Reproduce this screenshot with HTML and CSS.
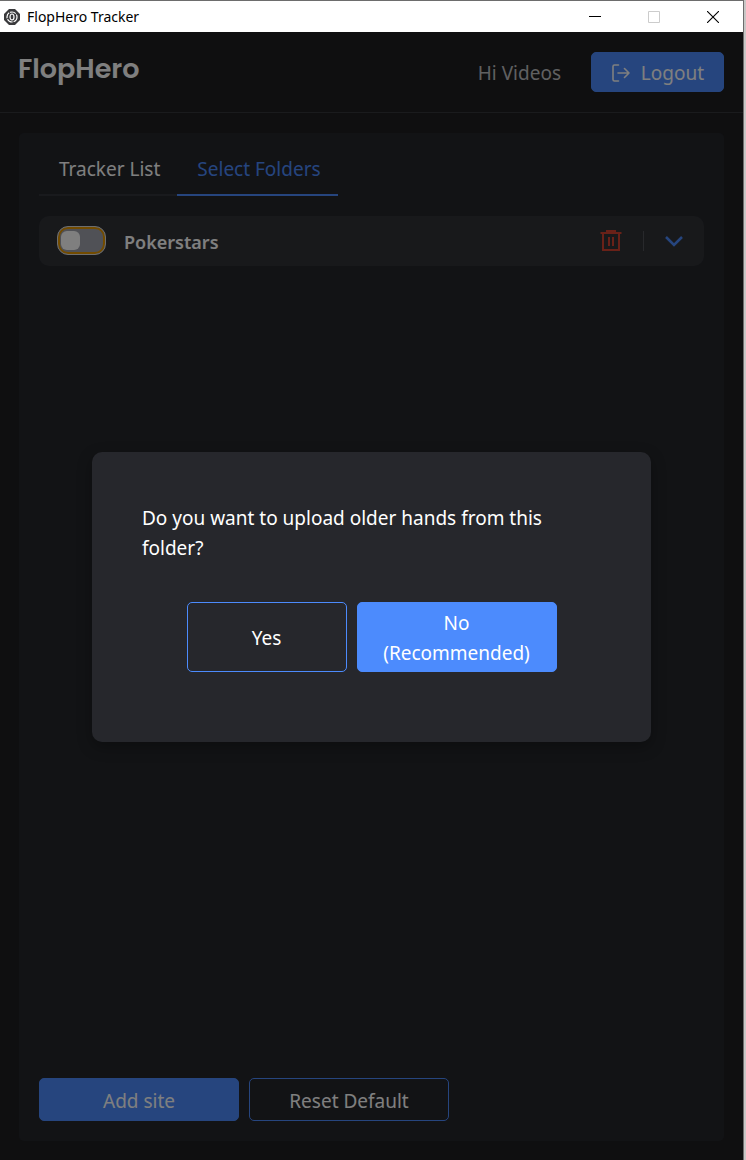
FILE: index.html
```html
<!DOCTYPE html>
<html lang="en">
<head>
    <meta charset="UTF-8">
    <meta name="viewport" content="width=device-width, initial-scale=1.0">
    <title>FlopHero Tracker</title>
    <link rel="stylesheet" href="styles.css">
</head>
<body>

    <div class="window">
        <div class="titlebar">
            <svg class="app-icon" viewBox="0 0 16 16" width="16" height="16">
                <path d="M5 0h6l5 5v6l-5 5H5l-5-5V5z" fill="#3a3a3c"/>
                <circle cx="8" cy="8" r="5" fill="none" stroke="#fff" stroke-width="1.2" stroke-dasharray="6 1"/>
                <ellipse cx="8" cy="8" rx="2" ry="3" fill="none" stroke="#fff" stroke-width="1.2"/>
            </svg>
            <span class="titlebar-text">FlopHero Tracker</span>
            <button class="win-btn" aria-label="Minimize">
                <svg viewBox="0 0 12 12" width="12" height="12"><path d="M0 5.5h12" stroke="#000"/></svg>
            </button>
            <button class="win-btn" aria-label="Maximize" disabled>
                <svg viewBox="0 0 12 12" width="12" height="12"><path d="M.5.5h11v11H.5z" fill="none" stroke="#ccc"/></svg>
            </button>
            <button class="win-btn" aria-label="Close">
                <svg viewBox="0 0 12 12" width="12" height="12"><path d="M0 0l12 12M12 0L0 12" stroke="#000" stroke-width="1.1"/></svg>
            </button>
        </div>

        <div class="app">
            <header class="header">
                <h1 class="logo">FlopHero</h1>
                <span class="greeting">Hi Videos</span>
                <button class="btn btn-primary btn-logout">
                    <svg viewBox="0 0 18 18" width="18" height="18" fill="none" stroke="currentColor" stroke-width="1.6" stroke-linecap="round" stroke-linejoin="round">
                        <path d="M6.500 1H2.500Q1 1 1 2.500v13Q1 17 2.500 17h4M6 9h11M12.500 4.500L17 9l-4.500 4.500"/>
                    </svg>
                    Logout
                </button>
            </header>

            <main class="panel">
                <nav class="tabs">
                    <a href="#list" class="tab">Tracker List</a>
                    <a href="#folders" class="tab active">Select Folders</a>
                </nav>

                <div class="site">
                    <input type="checkbox" class="toggle" id="pokerstars">
                    <label for="pokerstars" class="site-name">Pokerstars</label>
                    <button class="icon-btn delete" aria-label="Delete">
                        <svg viewBox="0 0 22 22" width="22" height="22" fill="none" stroke="currentColor" stroke-width="2">
                            <path d="M.500 3h21M6 1h10M3 3v17h16V3M9 7v9M13 7v9"/>
                        </svg>
                    </button>
                    <span class="divider"></span>
                    <button class="icon-btn" aria-label="Expand">
                        <svg viewBox="0 0 18 12" width="18" height="12" fill="none" stroke="currentColor" stroke-width="2.500">
                            <path d="M1 2l8 8 8-8"/>
                        </svg>
                    </button>
                </div>

                <div class="actions">
                    <button class="btn btn-primary">Add site</button>
                    <button class="btn btn-outline">Reset Default</button>
                </div>
            </main>

            <div class="overlay">
                <div class="modal" role="dialog" aria-modal="true" aria-labelledby="question">
                    <p id="question" class="modal-text">Do you want to upload older hands from this folder?</p>
                    <div class="modal-actions">
                        <button class="btn btn-outline btn-yes">Yes</button>
                        <button class="btn btn-primary btn-no">No (Recommended)</button>
                    </div>
                </div>
            </div>
        </div>
    </div>

</body>
</html>
```
FILE: styles.css
```css
* {
    box-sizing: border-box;
}
body {
    margin: 0;
    padding-right: 2px;
    background-color: #c9c7c6;
    font-family: "Segoe UI", "Noto Sans", sans-serif;
    font-size: 19px;
    line-height: 30px;
    color: #fff;
}
button {
    font: inherit;
    color: inherit;
    cursor: pointer;
}
.window {
    display: flex;
    flex-direction: column;
    min-height: 100vh;
    border-top: 1px solid #6d6d6d;
    border-right: 1px solid #6d6d6d;
}

/* Title bar */
.titlebar {
    display: flex;
    align-items: center;
    height: 31px;
    padding: 0 1px 0 4px;
    background-color: #fff;
    color: #000;
    font-size: 14px;
}
.titlebar-text {
    flex: 1;
    padding-left: 7px;
}
.win-btn {
    display: flex;
    align-items: center;
    justify-content: center;
    width: 59px;
    height: 31px;
    padding: 0;
    border: none;
    background: none;
}

/* App */
.app {
    position: relative;
    display: flex;
    flex: 1;
    flex-direction: column;
    background-color: #1e1e20;
}
.header {
    display: flex;
    align-items: center;
    height: 81px;
    padding: 0 19px 0 18px;
    border-bottom: 1px solid #35363a;
}
.logo {
    flex: 1;
    margin: 0 0 6px;
    font-family: Poppins, Inter, sans-serif;
    font-size: 27px;
    font-weight: 600;
}
.greeting {
    margin-right: 30px;
    padding-top: 2px;
    color: #c0c0c2;
}
.btn {
    width: 200px;
    padding: 7px 20px 4px;
    border: 1px solid #4c8bfd;
    border-radius: 5px;
}
.btn-primary {
    background-color: #4c8bfd;
}
.btn-outline {
    background-color: transparent;
}
.btn-logout {
    display: flex;
    align-items: center;
    justify-content: space-between;
    width: 133px;
    height: 40px;
    padding: 2px 19px 0 20px;
}
.panel {
    display: flex;
    flex: 1;
    flex-direction: column;
    margin: 20px 19px 19px;
    padding: 20px;
    border-radius: 5px;
    background-color: #24262b;
}

/* Tabs */
.tabs {
    display: flex;
    margin-top: -10px;
}
.tab {
    padding: 11px 17px 10px 20px;
    border-bottom: 2px solid #33353a;
    color: inherit;
    text-decoration: none;
}
.tab.active {
    border-color: #4c8bfd;
    color: #4c8bfd;
}

/* Site row */
.site {
    display: flex;
    align-items: center;
    height: 50px;
    margin-top: 20px;
    padding: 0 21px 1px 18px;
    border-radius: 10px;
    background-color: #303237;
}
.toggle {
    appearance: none;
    width: 49px;
    height: 29px;
    margin: 0;
    padding: 3px;
    border: 1px solid #ddd;
    border-radius: 11px;
    background-color: #a0a3ad;
    box-shadow: inset 0 0 0 2px #e59700;
    cursor: pointer;
}
.toggle::before {
    content: "";
    display: block;
    width: 19px;
    height: 19px;
    margin-top: 1px;
    border-radius: 6px;
    background-color: #fff;
}
.toggle:checked::before {
    margin-left: 22px;
}
.site-name {
    flex: 1;
    padding: 3px 0 0 18px;
    font-size: 18px;
    font-weight: 600;
}
.icon-btn {
    display: flex;
    padding: 0;
    border: none;
    background: none;
    color: #4c8bfd;
}
.delete {
    color: #d24230;
}
.divider {
    width: 1px;
    height: 20px;
    margin: 0 21px;
    background-color: #505258;
}
.actions {
    display: flex;
    gap: 10px;
    margin-top: auto;
}

/* Modal */
.overlay {
    position: absolute;
    inset: 0;
    display: flex;
    align-items: center;
    justify-content: center;
    padding: 2px 92px 0;
    background-color: rgba(0, 0, 0, 0.5);
}
.modal {
    flex: 1;
    padding: 51px 50px 70px;
    border-radius: 10px;
    background-color: #26272c;
    box-shadow: 0 5px 15px rgba(0, 0, 0, 0.3);
}
.modal-text {
    margin: 0 0 39px;
}
.modal-actions {
    display: flex;
    justify-content: center;
    gap: 10px;
}
.modal .btn {
    padding: 5px 20px 3px;
}
.modal .btn-yes {
    width: 160px;
}
```
